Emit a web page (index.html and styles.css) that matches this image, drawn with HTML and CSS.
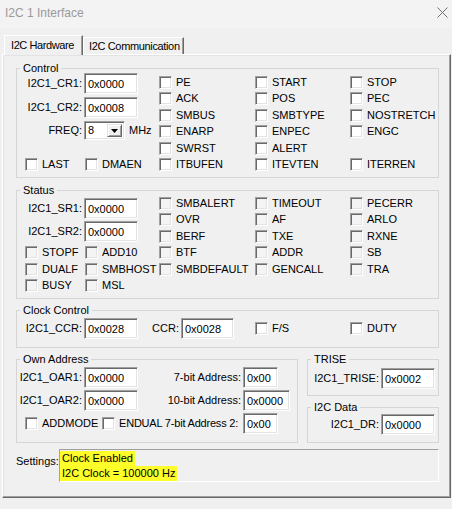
FILE: index.html
```html
<!DOCTYPE html>
<html>
<head>
<meta charset="utf-8">
<title>I2C 1 Interface</title>
<link rel="stylesheet" href="styles.css">
</head>
<body>
<div class="window">
  <div class="titlebar">
    <span class="title">I2C 1 Interface</span>
    <svg class="close" width="11" height="11" viewBox="0 0 11 11"><path d="M0.5 0.5 L10.5 10.5 M10.5 0.5 L0.5 10.5" stroke="#707070" stroke-width="1" fill="none"/></svg>
  </div>
  <div class="tabs">
    <div class="tab active">I2C Hardware</div>
    <div class="tab">I2C Communication</div>
  </div>
  <div class="panel">
    <div class="group g-control">
      <span class="glabel">Control</span>
      <div class="gbody">
        <div class="regs regs-control">
          <div class="field"><span class="lbl w67">I2C1_CR1:</span><span class="inp w54">0x0000</span></div>
          <div class="field"><span class="lbl w67">I2C1_CR2:</span><span class="inp w54">0x0008</span></div>
          <div class="field combo-field"><span class="lbl w67">FREQ:</span><span class="combo"><span class="combo-val">8</span><span class="combo-btn"><svg width="7" height="4" viewBox="0 0 7 4"><path d="M0 0 H7 L3.5 4 Z" fill="#000"/></svg></span></span><span class="unit">MHz</span></div>
        </div>
        <div class="pair row6"><div class="chk w60"><span class="cb"></span>LAST</div><div class="chk"><span class="cb"></span>DMAEN</div></div>
        <div class="col c1">
          <div class="chk"><span class="cb"></span>PE</div>
          <div class="chk"><span class="cb"></span>ACK</div>
          <div class="chk"><span class="cb"></span>SMBUS</div>
          <div class="chk"><span class="cb"></span>ENARP</div>
          <div class="chk"><span class="cb"></span>SWRST</div>
          <div class="chk"><span class="cb"></span>ITBUFEN</div>
        </div>
        <div class="col c2">
          <div class="chk"><span class="cb"></span>START</div>
          <div class="chk"><span class="cb"></span>POS</div>
          <div class="chk"><span class="cb"></span>SMBTYPE</div>
          <div class="chk"><span class="cb"></span>ENPEC</div>
          <div class="chk"><span class="cb"></span>ALERT</div>
          <div class="chk"><span class="cb"></span>ITEVTEN</div>
        </div>
        <div class="col c3">
          <div class="chk"><span class="cb"></span>STOP</div>
          <div class="chk"><span class="cb"></span>PEC</div>
          <div class="chk"><span class="cb"></span>NOSTRETCH</div>
          <div class="chk"><span class="cb"></span>ENGC</div>
          <div class="chk empty"></div>
          <div class="chk"><span class="cb"></span>ITERREN</div>
        </div>
      </div>
    </div>

    <div class="group g-status">
      <span class="glabel">Status</span>
      <div class="gbody">
        <div class="regs regs-status">
          <div class="field"><span class="lbl w67">I2C1_SR1:</span><span class="inp w54">0x0000</span></div>
          <div class="field"><span class="lbl w67">I2C1_SR2:</span><span class="inp w54">0x0000</span></div>
        </div>
        <div class="pair row4"><div class="chk ro w60"><span class="cb"></span>STOPF</div><div class="chk ro"><span class="cb"></span>ADD10</div></div>
        <div class="pair row5"><div class="chk ro w60"><span class="cb"></span>DUALF</div><div class="chk ro"><span class="cb"></span>SMBHOST</div></div>
        <div class="pair row6"><div class="chk ro w60"><span class="cb"></span>BUSY</div><div class="chk ro"><span class="cb"></span>MSL</div></div>
        <div class="col c1">
          <div class="chk ro"><span class="cb"></span>SMBALERT</div>
          <div class="chk ro"><span class="cb"></span>OVR</div>
          <div class="chk ro"><span class="cb"></span>BERF</div>
          <div class="chk ro"><span class="cb"></span>BTF</div>
          <div class="chk ro"><span class="cb"></span>SMBDEFAULT</div>
        </div>
        <div class="col c2">
          <div class="chk ro"><span class="cb"></span>TIMEOUT</div>
          <div class="chk ro"><span class="cb"></span>AF</div>
          <div class="chk ro"><span class="cb"></span>TXE</div>
          <div class="chk ro"><span class="cb"></span>ADDR</div>
          <div class="chk ro"><span class="cb"></span>GENCALL</div>
        </div>
        <div class="col c3">
          <div class="chk ro"><span class="cb"></span>PECERR</div>
          <div class="chk ro"><span class="cb"></span>ARLO</div>
          <div class="chk ro"><span class="cb"></span>RXNE</div>
          <div class="chk ro"><span class="cb"></span>SB</div>
          <div class="chk ro"><span class="cb"></span>TRA</div>
        </div>
      </div>
    </div>

    <div class="group g-clock">
      <span class="glabel">Clock Control</span>
      <div class="rowbody">
        <span class="lbl w67">I2C1_CCR:</span><span class="inp w54">0x0028</span>
        <span class="lbl ccr-lbl">CCR:</span><span class="inp w53">0x0028</span>
        <div class="chk fs"><span class="cb"></span>F/S</div>
        <div class="chk"><span class="cb"></span>DUTY</div>
      </div>
    </div>

    <div class="lower">
      <div class="group g-own">
        <span class="glabel">Own Address</span>
        <div class="ownbody">
          <div class="field"><span class="lbl w67">I2C1_OAR1:</span><span class="inp w54">0x0000</span><span class="lbl w105">7-bit Address:</span><span class="inp w35">0x00</span></div>
          <div class="field"><span class="lbl w67">I2C1_OAR2:</span><span class="inp w54">0x0000</span><span class="lbl w105">10-bit Address:</span><span class="inp w47">0x0000</span></div>
          <div class="field addm"><div class="chk w77"><span class="cb"></span>ADDMODE</div><div class="chk endual"><span class="cb"></span>ENDUAL 7-bit Address 2:</div><span class="inp w35">0x00</span></div>
        </div>
      </div>
      <div class="rightcol">
        <div class="group g-trise">
          <span class="glabel">TRISE</span>
          <div class="field small-body"><span class="lbl w72">I2C1_TRISE:</span><span class="inp w54">0x0002</span></div>
        </div>
        <div class="group g-data">
          <span class="glabel">I2C Data</span>
          <div class="field small-body data-body"><span class="lbl w72">I2C1_DR:</span><span class="inp w54">0x0000</span></div>
        </div>
      </div>
    </div>

    <div class="settings">
      <span class="settings-lbl">Settings:</span>
      <div class="settings-box">
        <span class="hl">Clock Enabled</span>
        <span class="hl">I2C Clock = 100000 Hz</span>
      </div>
    </div>
  </div>
</div>
</body>
</html>
```

FILE: styles.css
```css
* { box-sizing: border-box; }

html, body {
  margin: 0;
  padding: 0;
}

body {
  width: 452px;
  height: 509px;
  overflow: hidden;
  background: #f0f0f0;
  font-family: "Liberation Sans", Arial, sans-serif;
  font-size: 11px;
  line-height: 13px;
  color: #000;
}

.window {
  width: 452px;
  height: 509px;
}

/* title bar */
.titlebar {
  height: 28px;
  background: #f3f3f3;
  display: flex;
  justify-content: space-between;
  align-items: flex-start;
  padding: 6px 4px 0 5px;
}
.title {
  font-size: 12px;
  line-height: 14px;
  color: #9a9a9a;
}
.close {
  margin-top: 1px;
}

/* tabs */
.tabs {
  position: relative;
  z-index: 1;
  height: 27px;
  margin-bottom: -1px;
  display: flex;
  align-items: flex-end;
  padding-left: 4px;
}
.tab {
  height: 17px;
  margin-bottom: 1px;
  padding: 2px 0 0 5px;
  border-top: 1px solid #fff;
  border-left: 1px solid #fff;
  border-right: 1px solid #696969;
  box-shadow: inset -1px 0 #a0a0a0;
  background: #f0f0f0;
  width: 101px;
  white-space: nowrap;
  letter-spacing: -0.35px;
}
.tab.active {
  height: 20px;
  margin-bottom: 0;
  width: 79px;
  padding: 3px 0 0 6px;
  letter-spacing: -0.4px;
}

/* panel */
.panel {
  margin-left: 2px;
  width: 449px;
  height: 444px;
  border: 1px solid;
  border-color: #fff #696969 #696969 #fff;
  box-shadow: inset -1px -1px #a0a0a0, inset 1px 1px #e3e3e3;
  padding: 13px 11px 0 13px;
}

/* group boxes */
.group {
  position: relative;
  border: 1px solid #d5d5d5;
}
.glabel {
  position: absolute;
  top: -7px;
  left: 3px;
  padding: 0 3px;
  background: #f0f0f0;
  line-height: 13px;
  white-space: nowrap;
}

.g-control { height: 110px; margin-bottom: 12px; }
.g-status { height: 109px; margin-bottom: 11px; }
.g-clock { height: 38px; margin-bottom: 11px; }

.gbody {
  display: grid;
  grid-template-columns: 142px 96px 95px 1fr;
  grid-template-rows: repeat(6, 16.5px);
  padding-top: 5px;
}
.g-status .gbody { padding-top: 4px; }

.regs {
  grid-column: 1;
  grid-row: 1 / 6;
  display: flex;
  flex-direction: column;
  gap: 3px;
}
.regs-control { margin-top: -1px; }
.regs-status { grid-row: 1 / 4; margin-top: 3px; gap: 2px; }

.pair {
  grid-column: 1;
  display: flex;
  align-items: center;
  padding-left: 8px;
}
.row4 { grid-row: 4; }
.row5 { grid-row: 5; }
.row6 { grid-row: 6; }

.col {
  grid-row: 1 / 7;
  display: grid;
  grid-template-rows: repeat(6, 16.5px);
}
.c1 { grid-column: 2; }
.c2 { grid-column: 3; }
.c3 { grid-column: 4; }

.chk {
  display: flex;
  align-items: center;
  gap: 4px;
  height: 16.5px;
  white-space: nowrap;
}
.cb {
  flex: none;
  width: 13px;
  height: 13px;
  background: #fff;
  border: 1px solid;
  border-color: #a0a0a0 #fff #fff #a0a0a0;
  box-shadow: inset 1px 1px #696969, inset -1px -1px #e3e3e3;
}
.chk.ro .cb { background: #f4f4f4; }

.w60 { width: 60px; flex: none; }
.w77 { width: 77px; flex: none; }

/* text fields */
.field {
  display: flex;
  align-items: center;
  height: 21px;
}
.lbl {
  flex: none;
  text-align: right;
  padding-right: 2px;
  white-space: nowrap;
}
.w67 { width: 67px; }
.w72 { width: 73px; }
.w105 { width: 105px; }

.inp {
  flex: none;
  height: 21px;
  display: flex;
  align-items: center;
  padding: 1px 0 0 3px;
  background: #fff;
  border: 1px solid;
  border-color: #a0a0a0 #fff #fff #a0a0a0;
  box-shadow: inset 1px 1px #696969, inset -1px -1px #e3e3e3;
  white-space: nowrap;
}
.w54 { width: 54px; }
.w53 { width: 53px; }
.w47 { width: 47px; }
.w35 { width: 35px; }

/* combo box */
.combo-field { height: 19px; margin-top: 0; }
.combo {
  flex: none;
  width: 41px;
  height: 19px;
  display: flex;
  align-items: center;
  justify-content: space-between;
  padding: 2px;
  background: #fff;
  border: 1px solid;
  border-color: #a0a0a0 #fff #fff #a0a0a0;
  box-shadow: inset 1px 1px #696969, inset -1px -1px #e3e3e3;
}
.combo-val { padding-left: 1px; }
.combo-btn {
  width: 15px;
  height: 13px;
  display: flex;
  align-items: center;
  justify-content: center;
  background: #f0f0f0;
  border: 1px solid;
  border-color: #e3e3e3 #696969 #696969 #e3e3e3;
  box-shadow: inset 1px 1px #fff, inset -1px -1px #a0a0a0;
}
.unit { margin-left: 4px; }

/* clock control */
.rowbody {
  display: flex;
  align-items: center;
  padding-top: 7px;
}
.ccr-lbl { width: 43px; }
.fs { width: 95px; margin-left: 21px; }

/* lower area */
.lower {
  display: flex;
  gap: 9px;
  height: 84px;
}
.g-own {
  width: 282px;
  height: 84px;
}
.ownbody {
  display: flex;
  flex-direction: column;
  gap: 2px;
  padding-top: 7px;
}
.addm { padding-left: 8px; }
.endual { width: 141px; flex: none; letter-spacing: -0.2px; }

.rightcol {
  width: 132px;
  display: flex;
  flex-direction: column;
  gap: 11px;
}
.g-trise { height: 37px; }
.g-data { height: 36px; }
.small-body { padding-top: 8px; height: 29px; }
.data-body { padding-top: 6px; height: 27px; }

/* settings */
.settings {
  margin-top: 6px;
  display: flex;
  align-items: flex-start;
  padding-left: 1px;
  margin-left: -1px;
}
.settings-lbl {
  width: 43px;
  padding-top: 6px;
}
.settings-box {
  width: 380px;
  height: 33px;
  border: 1px solid;
  border-color: #a0a0a0 #fff #fff #a0a0a0;
  display: flex;
  flex-direction: column;
  align-items: flex-start;
  padding-top: 1px;
}
.hl {
  background: #fdfd2a;
  padding: 1px 2px 1px 2px;
  line-height: 13px;
}
```
